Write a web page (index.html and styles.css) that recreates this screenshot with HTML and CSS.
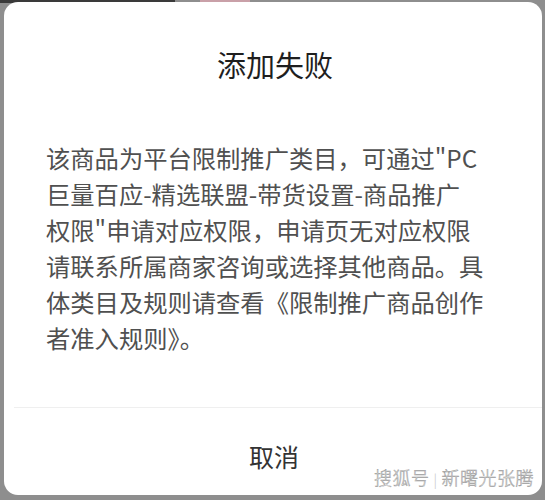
FILE: index.html
```html
<!DOCTYPE html>
<html lang="zh-CN">
<head>
<meta charset="utf-8">
<title>添加失败</title>
<link rel="stylesheet" href="styles.css">
</head>
<body>
<div class="topstrip"><span class="dark"></span><span class="pink"></span></div>
<div class="card">
  <div class="title">添加失败</div>
  <div class="content">该商品为平台限制推广类目，可通过"PC<br>巨量百应-精选联盟-带货设置-商品推广<br>权限"申请对应权限，申请页无对应权限<br>请联系所属商家咨询或选择其他商品。具<br>体类目及规则请查看《限制推广商品创作<br>者准入规则》。</div>
  <div class="footer">
    <div class="cancel">取消</div>
    <div class="watermark">搜狐号<span class="sep">|</span>新曙光张腾</div>
  </div>
</div>
</body>
</html>
```
FILE: styles.css
```css
html, body {
  margin: 0;
  padding: 0;
}
body {
  width: 545px;
  height: 500px;
  overflow: hidden;
  background: #8e8e8e;
  font-family: "Noto Sans CJK SC", "Noto Sans", sans-serif;
}
.topstrip {
  display: flex;
  height: 3px;
}
.topstrip .dark {
  width: 175px;
  background: #3a3a3a;
}
.topstrip .pink {
  width: 50px;
  margin-left: 25px;
  background: #c9a0a8;
}
.card {
  position: relative;
  margin: -1px 3px 0 4px;
  height: 493px;
  background: #ffffff;
  border-radius: 14px;
  display: flex;
  flex-direction: column;
  box-sizing: border-box;
}
.title {
  padding-top: 44px;
  font-size: 29px;
  line-height: 36px;
  text-align: center;
  color: #1e1e1e;
  padding-left: 4px;
}
.content {
  padding: 58px 20px 51px 42px;
  font-size: 24.3px;
  line-height: 36px;
  color: #505050;
  white-space: nowrap;
}
.footer {
  flex: 1;
  border-top: 1px solid #efefef;
  margin-left: 10px;
  padding-top: 30px;
  box-sizing: border-box;
}
.cancel {
  font-size: 25px;
  line-height: 36px;
  text-align: center;
  color: #333333;
  margin-left: -8px;
}
.watermark {
  position: absolute;
  right: 8px;
  bottom: 6px;
  font-size: 18px;
  line-height: 20px;
  font-weight: 300;
  color: #ffffff;
  -webkit-text-stroke: 0.5px #9a9a9a;
  letter-spacing: 0.5px;
}
.watermark .sep {
  font-size: 14px;
  margin: 0 4px;
  color: #c4c4c4;
  -webkit-text-stroke: 0;
}
```
